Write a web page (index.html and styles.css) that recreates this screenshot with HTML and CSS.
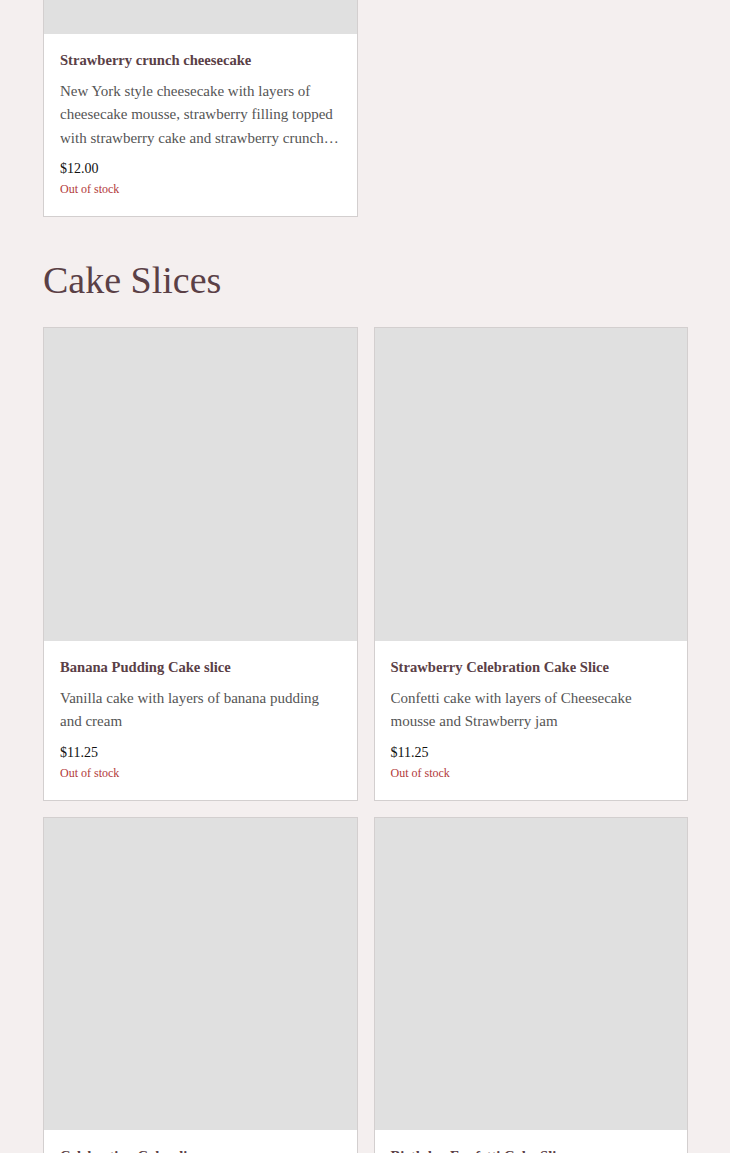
FILE: index.html
```html
<!DOCTYPE html>
<html lang="en">
<head>
<meta charset="utf-8">
<title>Cake Slices</title>
<link rel="stylesheet" href="styles.css">
</head>
<body>
<main class="page">
  <section class="section section--scrolled">
    <div class="grid">
      <article class="card">
        <div class="card__image"></div>
        <div class="card__body">
          <h3 class="card__title">Strawberry crunch cheesecake</h3>
          <p class="card__desc">New York style cheesecake with layers of cheesecake mousse, strawberry filling topped with strawberry cake and strawberry crunch topping, finished with cream cheese frosting</p>
          <div class="card__price">$12.00</div>
          <div class="card__stock">Out of stock</div>
        </div>
      </article>
    </div>
  </section>

  <section class="section">
    <h2 class="section__title">Cake Slices</h2>
    <div class="grid">
      <article class="card">
        <div class="card__image"></div>
        <div class="card__body">
          <h3 class="card__title">Banana Pudding Cake slice</h3>
          <p class="card__desc">Vanilla cake with layers of banana pudding and cream</p>
          <div class="card__price">$11.25</div>
          <div class="card__stock">Out of stock</div>
        </div>
      </article>
      <article class="card">
        <div class="card__image"></div>
        <div class="card__body">
          <h3 class="card__title">Strawberry Celebration Cake Slice</h3>
          <p class="card__desc">Confetti cake with layers of Cheesecake mousse and Strawberry jam</p>
          <div class="card__price">$11.25</div>
          <div class="card__stock">Out of stock</div>
        </div>
      </article>
      <article class="card">
        <div class="card__image"></div>
        <div class="card__body">
          <h3 class="card__title">Celebration Cake slice</h3>
          <p class="card__desc">Confetti cake with layers of vanilla buttercream</p>
          <div class="card__price">$11.25</div>
          <div class="card__stock">Out of stock</div>
        </div>
      </article>
      <article class="card">
        <div class="card__image"></div>
        <div class="card__body">
          <h3 class="card__title">Birthday Funfetti Cake Slice</h3>
          <p class="card__desc">Funfetti cake with layers of vanilla buttercream and sprinkles</p>
          <div class="card__price">$11.25</div>
          <div class="card__stock">Out of stock</div>
        </div>
      </article>
    </div>
  </section>
</main>
</body>
</html>
```

FILE: styles.css
```css
html, body {
  margin: 0;
  padding: 0;
  background: #f4efef;
}

body {
  font-family: "Liberation Serif", "DejaVu Serif", serif;
  color: #555;
}

.page {
  padding: 0 42px 0 43px;
}

.section--scrolled {
  margin-top: -280px;
}

.section__title {
  margin: 39px 0 23px;
  font-family: "Liberation Serif", "DejaVu Serif", serif;
  font-weight: 400;
  font-size: 38px;
  line-height: 48px;
  color: #5a4046;
}

.grid {
  display: grid;
  grid-template-columns: 1fr 1fr;
  gap: 16px;
}

.card {
  background: #fff;
  border: 1px solid #d3cfcf;
  display: flex;
  flex-direction: column;
}

.card__image {
  aspect-ratio: 1 / 1;
  background: #e0e0e0;
}

.card__body {
  padding: 16px 16px 19px;
}

.card__title {
  margin: 0 0 10px;
  font-family: "Liberation Serif", "DejaVu Serif", serif;
  font-weight: 700;
  font-size: 14.6px;
  line-height: 20px;
  color: #5a4046;
}

.card__desc {
  margin: 0 0 9px;
  font-size: 15px;
  line-height: 23.5px;
  color: #555;
  display: -webkit-box;
  -webkit-line-clamp: 3;
  -webkit-box-orient: vertical;
  overflow: hidden;
}

.card__price {
  font-size: 14px;
  line-height: 20px;
  color: #111;
}

.card__stock {
  margin-top: 2px;
  font-size: 12px;
  line-height: 16px;
  color: #b23a3a;
}
```
